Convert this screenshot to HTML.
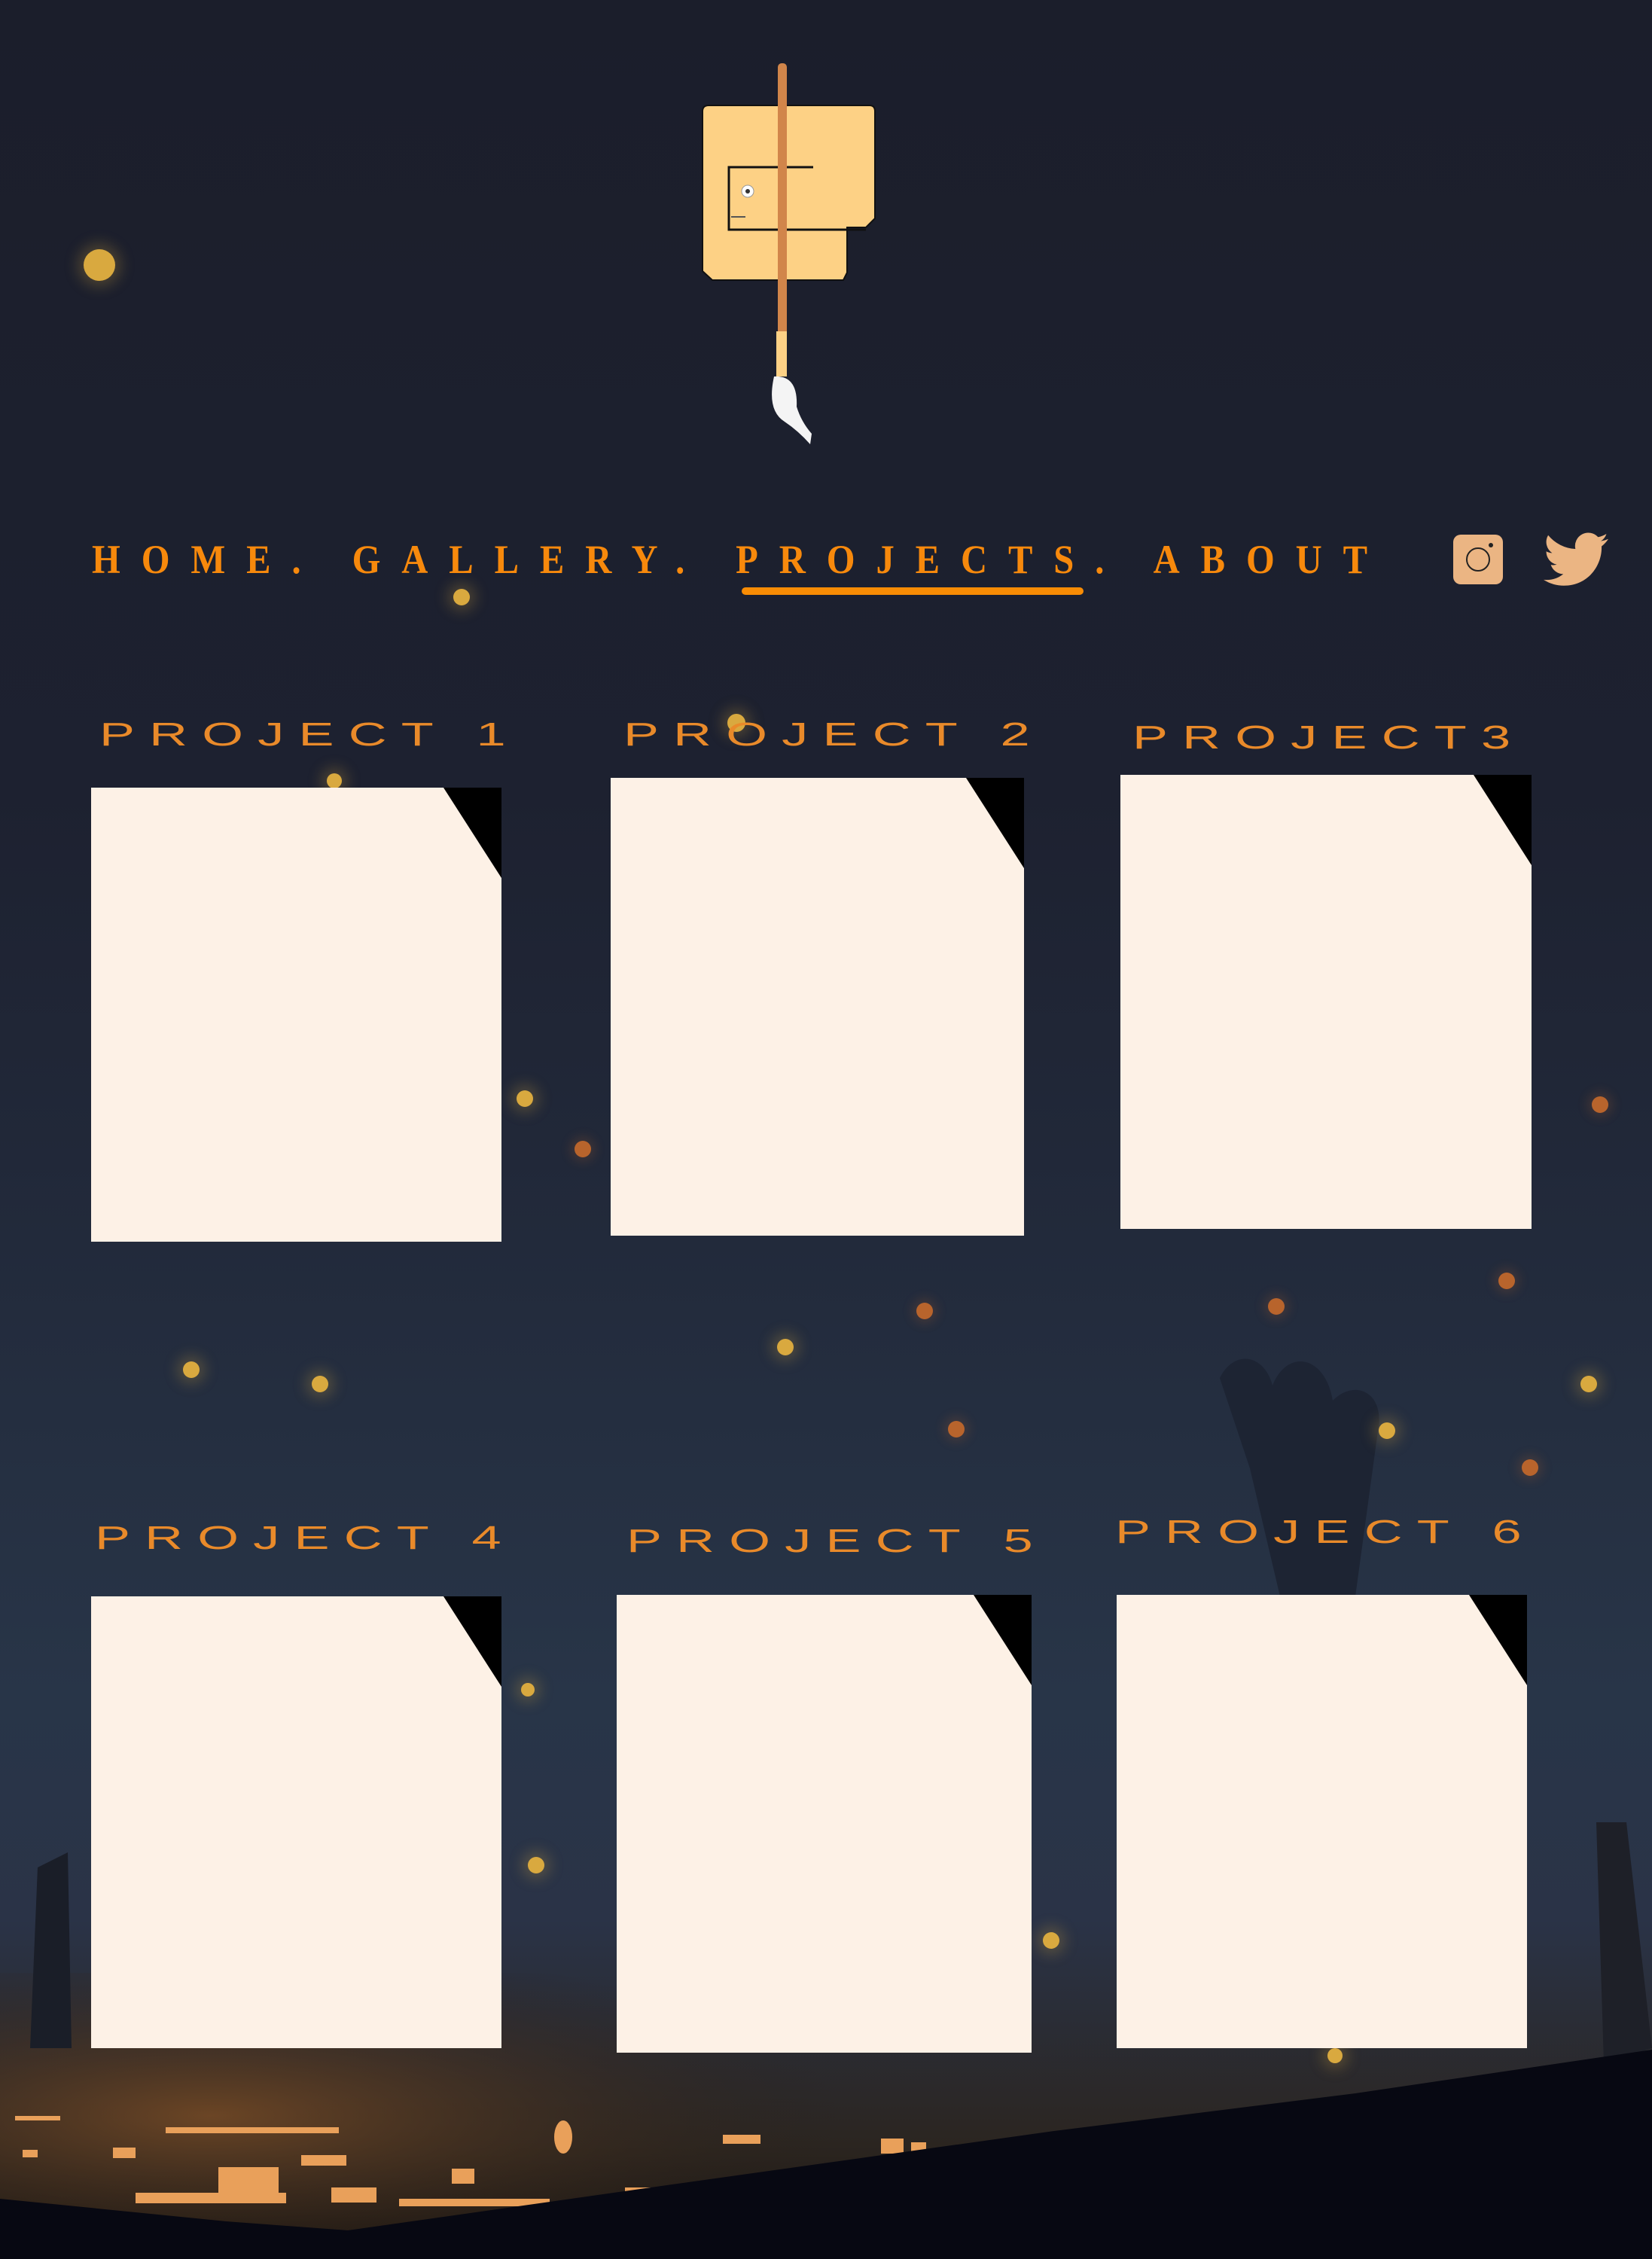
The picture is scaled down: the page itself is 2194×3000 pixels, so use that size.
<!DOCTYPE html>
<html><head><meta charset="utf-8"><style>
html,body{margin:0;padding:0}
body{width:2194px;height:3000px;position:relative;overflow:hidden;
background:linear-gradient(180deg,#1b1e2b 0%,#1d2130 35%,#222a3b 55%,#283548 75%,#2a3347 85%,#2b2520 95%,#1a1410 100%);
font-family:"Liberation Serif",serif}
.a{position:absolute}
.nav{position:absolute;top:712px;left:122px;font-family:"Liberation Serif",serif;font-size:54px;color:#f7890c;letter-spacing:31px;white-space:nowrap;font-weight:bold;transform:scaleX(0.9);transform-origin:left}
.t{position:absolute;font-family:"Liberation Sans",sans-serif;font-size:44px;color:#e98a2a;letter-spacing:12px;white-space:nowrap;transform:scaleX(1.6);transform-origin:left;line-height:44px}
.c{position:absolute;background:#fdf1e6}
.c::after{content:"";position:absolute;right:0;top:0;width:0;height:0;border-top:120px solid #000;border-left:77px solid transparent}
.d{position:absolute;border-radius:50%}
.y{background:#d9a93f;box-shadow:0 0 18px 8px rgba(217,169,63,.25)}
.o{background:#b8642c;box-shadow:0 0 14px 6px rgba(184,100,44,.2)}
</style></head><body>
<svg class="a" style="left:0;top:0" width="2194" height="3000">
 <defs><radialGradient id="g" cx="0.2" cy="0.5" r="0.6"><stop offset="0" stop-color="#6b4525"/><stop offset="1" stop-color="#2a2018" stop-opacity="0"/></radialGradient></defs>
 <rect x="0" y="2620" width="1400" height="380" fill="url(#g)"/>
 <path d="M1620 1830 C1640 1790 1680 1800 1690 1840 C1710 1790 1760 1800 1770 1860 C1800 1830 1840 1850 1830 1900 L1800 2120 L1700 2120 L1660 1950 Z" fill="#1d2433"/>
 <path d="M50 2480 L90 2460 L95 2720 L40 2720 Z" fill="#1a1e28"/>
 <path d="M2120 2420 L2160 2420 L2194 2720 L2130 2740 Z" fill="#1e2028"/>
 <g fill="#e9a05a">
  <rect x="20" y="2810" width="60" height="6"/><rect x="220" y="2825" width="230" height="8"/>
  <rect x="30" y="2855" width="20" height="10"/><rect x="150" y="2852" width="30" height="14"/>
  <rect x="400" y="2862" width="60" height="14"/><rect x="290" y="2878" width="80" height="40"/>
  <rect x="180" y="2912" width="200" height="14"/><rect x="440" y="2905" width="60" height="20"/>
  <rect x="530" y="2920" width="200" height="10"/><rect x="600" y="2880" width="30" height="20"/>
  <rect x="830" y="2905" width="40" height="14"/><rect x="960" y="2835" width="50" height="12"/>
  <rect x="1170" y="2840" width="30" height="20"/><rect x="1210" y="2845" width="20" height="14"/>
  <ellipse cx="748" cy="2838" rx="12" ry="22"/>
 </g>
 <path d="M0 2920 L300 2950 L462 2962 L900 2900 L1400 2830 L1800 2780 L2194 2722 L2194 3000 L0 3000 Z" fill="#070812"/>
</svg>
<div class="d y" style="left:111px;top:331px;width:42px;height:42px"></div>
<div class="d y" style="left:602px;top:782px;width:22px;height:22px"></div>
<div class="d y" style="left:686px;top:1448px;width:22px;height:22px"></div>
<div class="d o" style="left:763px;top:1515px;width:22px;height:22px"></div>
<div class="d y" style="left:966px;top:948px;width:24px;height:24px"></div>
<div class="d y" style="left:434px;top:1027px;width:20px;height:20px"></div>
<div class="d y" style="left:243px;top:1808px;width:22px;height:22px"></div>
<div class="d y" style="left:414px;top:1827px;width:22px;height:22px"></div>
<div class="d y" style="left:1032px;top:1778px;width:22px;height:22px"></div>
<div class="d o" style="left:1217px;top:1730px;width:22px;height:22px"></div>
<div class="d o" style="left:1259px;top:1887px;width:22px;height:22px"></div>
<div class="d o" style="left:1684px;top:1724px;width:22px;height:22px"></div>
<div class="d o" style="left:1990px;top:1690px;width:22px;height:22px"></div>
<div class="d o" style="left:2114px;top:1456px;width:22px;height:22px"></div>
<div class="d y" style="left:2099px;top:1827px;width:22px;height:22px"></div>
<div class="d y" style="left:1831px;top:1889px;width:22px;height:22px"></div>
<div class="d o" style="left:2021px;top:1938px;width:22px;height:22px"></div>
<div class="d y" style="left:1385px;top:2566px;width:22px;height:22px"></div>
<div class="d y" style="left:701px;top:2466px;width:22px;height:22px"></div>
<div class="d y" style="left:692px;top:2235px;width:18px;height:18px"></div>
<div class="d y" style="left:1763px;top:2720px;width:20px;height:20px"></div>

<svg class="a" style="left:920px;top:80px" width="260" height="520" viewBox="920 80 260 520">
 <path d="M933 148 Q933 140 941 140 L1155 140 Q1162 140 1162 148 L1162 290 L1150 302 L1125 302 L1125 362 L1120 372 L946 372 L933 360 Z" fill="#fdd185" stroke="#111" stroke-width="2"/>
 <path d="M1080 222 L968 222 L968 305 L1150 305" fill="none" stroke="#111" stroke-width="3"/>
 <rect x="1033" y="84" width="12" height="364" rx="5" fill="#d1854a"/>
 <circle cx="993" cy="254" r="8" fill="#fff" stroke="#999"/><circle cx="993" cy="254" r="3" fill="#333"/>
 <line x1="971" y1="288" x2="990" y2="288" stroke="#555" stroke-width="2"/>
 <rect x="1031" y="440" width="14" height="60" fill="#fdd185"/>
 <path d="M1028 500 Q1060 498 1058 540 Q1064 560 1078 576 L1076 590 Q1060 572 1042 560 Q1018 545 1028 500 Z" fill="#f4f4f4"/>
</svg>

<div class="nav">HOME. GALLERY. PROJECTS. ABOUT</div>
<div class="a" style="left:985px;top:780px;width:454px;height:10px;border-radius:5px;background:#f88c05"></div>
<svg class="a" style="left:1930px;top:710px" width="66" height="66" viewBox="0 0 66 66">
 <rect width="66" height="66" rx="10" fill="#ebb583"/>
 <circle cx="33" cy="33" r="15" fill="none" stroke="#222" stroke-width="2"/>
 <circle cx="50" cy="14" r="3" fill="#222"/>
</svg>
<svg class="a" style="left:2050px;top:706px" width="86" height="74" viewBox="0 0 24 20">
 <path fill="#ebb583" d="M24 2.4a9.8 9.8 0 0 1-2.8.8 4.9 4.9 0 0 0 2.1-2.7 9.9 9.9 0 0 1-3.1 1.2A4.9 4.9 0 0 0 11.8 6.1 14 14 0 0 1 1.7 1 4.9 4.9 0 0 0 3.2 7.6 4.9 4.9 0 0 1 1 7v.1a4.9 4.9 0 0 0 3.9 4.8 4.9 4.9 0 0 1-2.2.1 4.9 4.9 0 0 0 4.6 3.4A9.9 9.9 0 0 1 0 17.5 14 14 0 0 0 7.5 19.7c9.1 0 14-7.5 14-14v-.6A10 10 0 0 0 24 2.4z"/>
</svg>

<div class="t" style="left:132px;top:954px">PROJECT 1</div>
<div class="t" style="left:828px;top:954px">PROJECT 2</div>
<div class="t" style="left:1504px;top:958px;letter-spacing:12px">PROJECT3</div>
<div class="t" style="left:126px;top:2021px">PROJECT 4</div>
<div class="t" style="left:832px;top:2025px">PROJECT 5</div>
<div class="t" style="left:1481px;top:2013px">PROJECT 6</div>

<div class="c" style="left:121px;top:1046px;width:545px;height:603px"></div>
<div class="c" style="left:811px;top:1033px;width:549px;height:608px"></div>
<div class="c" style="left:1488px;top:1029px;width:546px;height:603px"></div>
<div class="c" style="left:121px;top:2120px;width:545px;height:600px"></div>
<div class="c" style="left:819px;top:2118px;width:551px;height:608px"></div>
<div class="c" style="left:1483px;top:2118px;width:545px;height:602px"></div>
</body></html>
